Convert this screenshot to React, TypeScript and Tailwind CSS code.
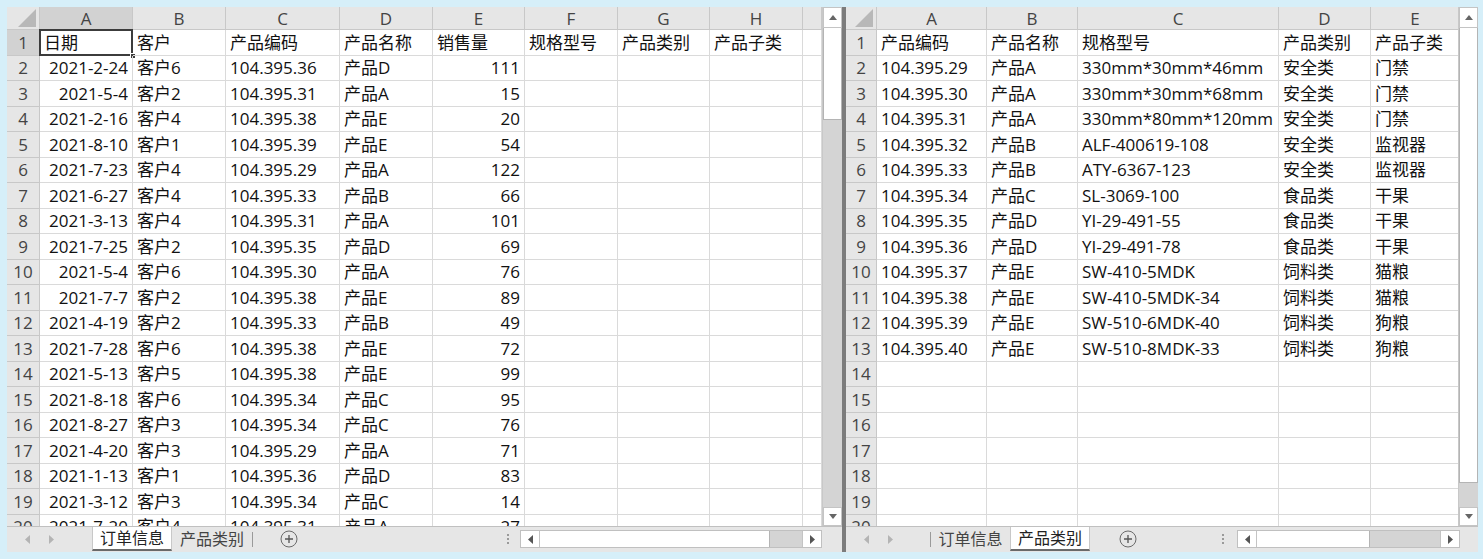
import React from 'react';

const FONT = '"Open Sans", "Noto Sans CJK SC", sans-serif';

type Cell = { v: string; right?: boolean };

const ordersRaw: [string, string, string, string, string][] = [
  ['2021-2-24', '客户6', '104.395.36', '产品D', '111'],
  ['2021-5-4', '客户2', '104.395.31', '产品A', '15'],
  ['2021-2-16', '客户4', '104.395.38', '产品E', '20'],
  ['2021-8-10', '客户1', '104.395.39', '产品E', '54'],
  ['2021-7-23', '客户4', '104.395.29', '产品A', '122'],
  ['2021-6-27', '客户4', '104.395.33', '产品B', '66'],
  ['2021-3-13', '客户4', '104.395.31', '产品A', '101'],
  ['2021-7-25', '客户2', '104.395.35', '产品D', '69'],
  ['2021-5-4', '客户6', '104.395.30', '产品A', '76'],
  ['2021-7-7', '客户2', '104.395.38', '产品E', '89'],
  ['2021-4-19', '客户2', '104.395.33', '产品B', '49'],
  ['2021-7-28', '客户6', '104.395.38', '产品E', '72'],
  ['2021-5-13', '客户5', '104.395.38', '产品E', '99'],
  ['2021-8-18', '客户6', '104.395.34', '产品C', '95'],
  ['2021-8-27', '客户3', '104.395.34', '产品C', '76'],
  ['2021-4-20', '客户3', '104.395.29', '产品A', '71'],
  ['2021-1-13', '客户1', '104.395.36', '产品D', '83'],
  ['2021-3-12', '客户3', '104.395.34', '产品C', '14'],
  ['2021-7-20', '客户4', '104.395.31', '产品A', '27'],
];

const productsRaw: string[][] = [
  ['104.395.29', '产品A', '330mm*30mm*46mm', '安全类', '门禁'],
  ['104.395.30', '产品A', '330mm*30mm*68mm', '安全类', '门禁'],
  ['104.395.31', '产品A', '330mm*80mm*120mm', '安全类', '门禁'],
  ['104.395.32', '产品B', 'ALF-400619-108', '安全类', '监视器'],
  ['104.395.33', '产品B', 'ATY-6367-123', '安全类', '监视器'],
  ['104.395.34', '产品C', 'SL-3069-100', '食品类', '干果'],
  ['104.395.35', '产品D', 'YI-29-491-55', '食品类', '干果'],
  ['104.395.36', '产品D', 'YI-29-491-78', '食品类', '干果'],
  ['104.395.37', '产品E', 'SW-410-5MDK', '饲料类', '猫粮'],
  ['104.395.38', '产品E', 'SW-410-5MDK-34', '饲料类', '猫粮'],
  ['104.395.39', '产品E', 'SW-510-6MDK-40', '饲料类', '狗粮'],
  ['104.395.40', '产品E', 'SW-510-8MDK-33', '饲料类', '狗粮'],
];

const leftCols = { letters: ['A', 'B', 'C', 'D', 'E', 'F', 'G', 'H', ''], widths: [93, 93, 114, 93, 92, 93, 92, 93, 19] };
const rightCols = { letters: ['A', 'B', 'C', 'D', 'E'], widths: [110, 91, 201, 92, 89] };

const leftRows: Cell[][] = [
  ['日期', '客户', '产品编码', '产品名称', '销售量', '规格型号', '产品类别', '产品子类'].map(v => ({ v })),
  ...ordersRaw.map(r => [
    { v: r[0], right: true },
    { v: r[1] },
    { v: r[2] },
    { v: r[3] },
    { v: r[4], right: true },
  ]),
];

const rightRows: Cell[][] = [
  ['产品编码', '产品名称', '规格型号', '产品类别', '产品子类'].map(v => ({ v })),
  ...productsRaw.map(r => r.map(v => ({ v }))),
];

const Corner = ({ w }: { w: number }) => (
  <div className="shrink-0 h-[23px] bg-[#e6e6e6] border-r border-b border-[#c8c8c8] flex items-end justify-end pr-[3px] pb-[2px]" style={{ width: w }}>
    <svg width="18" height="18" viewBox="0 0 18 18">
      <polygon points="18,0 18,18 0,18" fill="#b8b8b8" />
    </svg>
  </div>
);

const Grid = ({ cols, rows, rowHeadW, active }: { cols: typeof leftCols; rows: Cell[][]; rowHeadW: number; active: boolean }) => (
  <div className="flex-1 min-w-0 overflow-hidden bg-white">
    <div className="flex">
      <Corner w={rowHeadW} />
      {cols.letters.map((l, i) => (
        <div
          key={i}
          className={`shrink-0 h-[23px] flex items-center justify-center border-r border-b text-[17px] leading-none text-[#444] ${active && i === 0 ? 'bg-[#d2d2d2] border-b-[#8a8a8a] border-r-[#c8c8c8]' : 'bg-[#e6e6e6] border-[#c8c8c8]'}`}
          style={{ width: cols.widths[i] }}
        >
          {l}
        </div>
      ))}
    </div>
    {Array.from({ length: 20 }).map((_, r) => (
      <div key={r} className="flex h-[25.5px]">
        <div
          className={`shrink-0 flex items-center justify-center border-r border-b text-[17px] leading-none text-[#444] ${active && r === 0 ? 'bg-[#d2d2d2] border-r-[#8a8a8a] border-b-[#c8c8c8]' : 'bg-[#e6e6e6] border-[#c8c8c8]'}`}
          style={{ width: rowHeadW }}
        >
          {r + 1}
        </div>
        {cols.widths.map((w, c) => {
          const cell = rows[r]?.[c];
          const sel = active && r === 0 && c === 0;
          return (
            <div
              key={c}
              className={`shrink-0 relative flex items-center border-r border-b border-[#dadada] px-[4px] text-[17px] leading-none text-[#111] whitespace-nowrap ${cell?.right ? 'justify-end' : ''}`}
              style={{ width: w }}
            >
              {sel && (
                <>
                  <div className="absolute -left-px -top-px -right-px -bottom-px border-2 border-[#3c3c3c]" />
                  <div className="absolute -right-[4px] -bottom-[4px] w-[6px] h-[6px] bg-[#3c3c3c] border border-white" />
                </>
              )}
              <span className="relative">{cell?.v}</span>
            </div>
          );
        })}
      </div>
    ))}
  </div>
);

const VScroll = ({ thumbH }: { thumbH: number }) => (
  <div className="w-[20px] shrink-0 flex flex-col bg-[#d4d4d4] border-l border-[#c8c8c8]">
    <div className="h-[21px] bg-white border border-[#c4c4c4] flex items-center justify-center">
      <svg width="8" height="5" viewBox="0 0 8 5"><polygon points="4,0 8,5 0,5" fill="#666" /></svg>
    </div>
    <div className="bg-white border border-[#b4b4b4] border-t-0" style={{ height: thumbH }} />
    <div className="flex-1" />
    <div className="h-[19px] bg-white border border-[#c4c4c4] flex items-center justify-center">
      <svg width="8" height="5" viewBox="0 0 8 5"><polygon points="0,0 8,0 4,5" fill="#666" /></svg>
    </div>
  </div>
);

const NavArrows = ({ w }: { w: number }) => (
  <div className="shrink-0 flex items-center pl-[18px] gap-[19px]" style={{ width: w }}>
    <svg width="5" height="9" viewBox="0 0 5 9"><polygon points="5,0 5,9 0,4.5" fill="#b4b4b4" /></svg>
    <svg width="5" height="9" viewBox="0 0 5 9"><polygon points="0,0 5,4.5 0,9" fill="#b4b4b4" /></svg>
  </div>
);

const Tab = ({ label, active, w }: { label: string; active?: boolean; w: number }) => (
  <div
    className={`shrink-0 h-full flex items-center justify-center text-[16px] leading-none ${active ? 'bg-white text-[#222] border-b-2 border-[#6a6a6a] border-x border-x-[#c8c8c8]' : 'text-[#444]'}`}
    style={{ width: w }}
  >
    {label}
  </div>
);

const Sep = () => <div className="shrink-0 w-px h-[15px] bg-[#9a9a9a]" />;

const Plus = () => (
  <svg width="18" height="18" viewBox="0 0 18 18" className="shrink-0">
    <circle cx="9" cy="9" r="8" fill="none" stroke="#6a6a6a" strokeWidth="1" />
    <path d="M9 5v8M5 9h8" stroke="#555" strokeWidth="1.3" />
  </svg>
);

const Dots = () => (
  <div className="shrink-0 flex flex-col gap-[2px] items-center w-[4px]">
    <div className="w-[2px] h-[2px] bg-[#9a9a9a]" />
    <div className="w-[2px] h-[2px] bg-[#9a9a9a]" />
    <div className="w-[2px] h-[2px] bg-[#9a9a9a]" />
  </div>
);

const HScroll = ({ w, thumb }: { w: number; thumb: number }) => (
  <div className="shrink-0 h-[18px] flex bg-[#d4d4d4] border border-[#c0c0c0]" style={{ width: w }}>
    <div className="w-[19px] h-full bg-white border-r border-[#c4c4c4] flex items-center justify-center">
      <svg width="5" height="9" viewBox="0 0 5 9"><polygon points="5,0 5,9 0,4.5" fill="#555" /></svg>
    </div>
    <div className="h-full bg-white border-r border-[#b4b4b4]" style={{ width: thumb }} />
    <div className="flex-1" />
    <div className="w-[19px] h-full bg-white border-l border-[#c4c4c4] flex items-center justify-center">
      <svg width="5" height="9" viewBox="0 0 5 9"><polygon points="0,0 5,4.5 0,9" fill="#555" /></svg>
    </div>
  </div>
);

export default function App() {
  return (
    <div className="w-[1483px] h-[559px] bg-[#d6eff9] flex pt-[7px] pl-[7px]" style={{ fontFamily: FONT }}>
      {/* left window: 订单信息 */}
      <div className="w-[839px] h-[545px] flex flex-col bg-[#e6e6e6] border-r-4 border-r-[#7c7c7c]">
        <div className="flex h-[520px] border-b border-[#c0c0c0]">
          <Grid cols={leftCols} rows={leftRows} rowHeadW={33} active />
          <VScroll thumbH={92} />
        </div>
        <div className="flex items-center h-[24px] bg-[#e6e6e6]">
          <NavArrows w={85} />
          <Tab label="订单信息" active w={80} />
          <Tab label="产品类别" w={80} />
          <Sep />
          <div className="w-[27px]" />
          <Plus />
          <div className="flex-1" />
          <Dots />
          <div className="w-[10px]" />
          <HScroll w={302} thumb={230} />
          <div className="w-[20px]" />
        </div>
      </div>

      {/* right window: 产品类别 */}
      <div className="w-[632px] h-[545px] flex flex-col bg-[#e6e6e6]">
        <div className="flex h-[520px] border-b border-[#c0c0c0]">
          <Grid cols={rightCols} rows={rightRows} rowHeadW={31} active={false} />
          <VScroll thumbH={455} />
        </div>
        <div className="flex items-center h-[24px] bg-[#e6e6e6]">
          <NavArrows w={84} />
          <Sep />
          <Tab label="订单信息" w={79} />
          <Tab label="产品类别" active w={80} />
          <div className="w-[29px]" />
          <Plus />
          <div className="flex-1" />
          <Dots />
          <div className="w-[12px]" />
          <HScroll w={223} thumb={113} />
          <div className="w-[18px]" />
        </div>
      </div>
    </div>
  );
}
